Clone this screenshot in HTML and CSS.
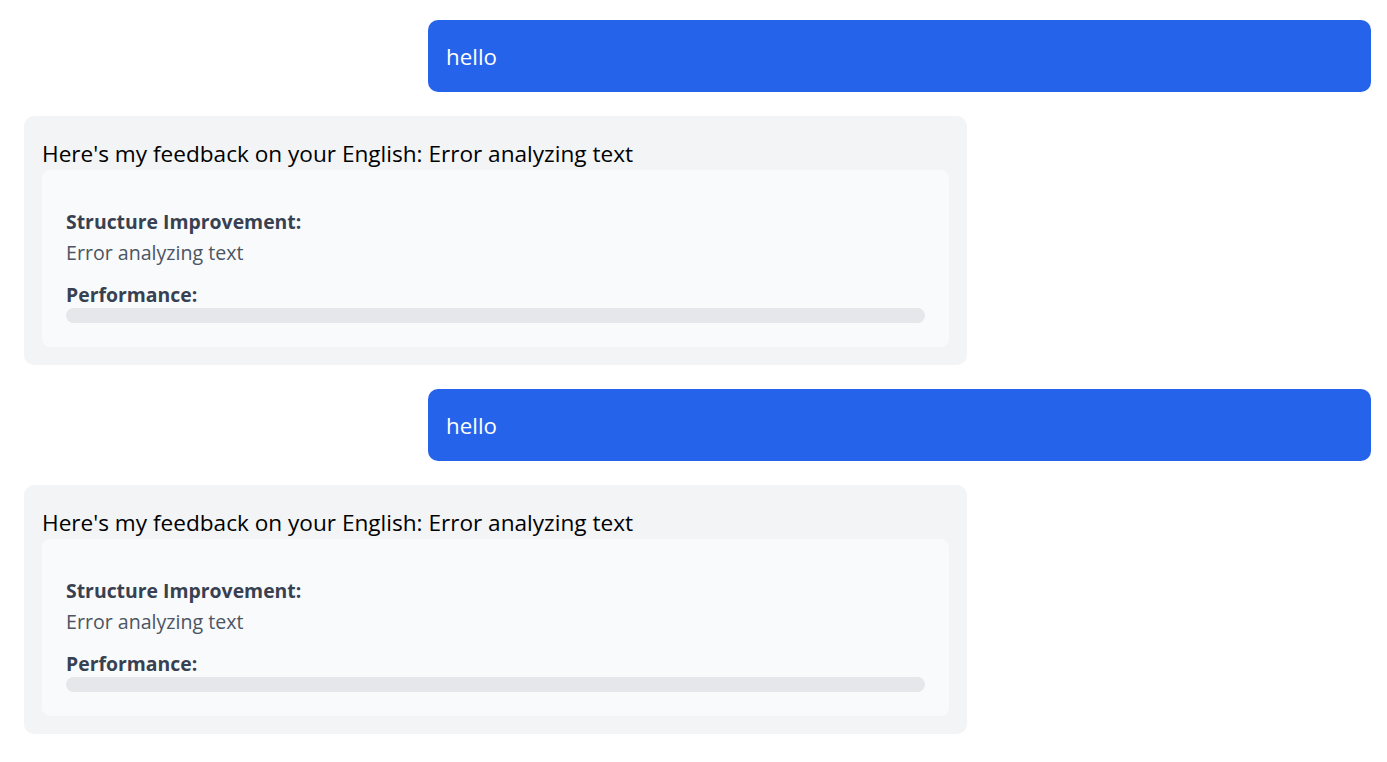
FILE: index.html
```html
<!DOCTYPE html>
<html lang="en">
<head>
<meta charset="utf-8">
<title>Chat</title>
<link rel="stylesheet" href="styles.css">
</head>
<body>
<div class="chat">
  <div class="msg user">hello</div>
  <div class="msg bot">
    <div class="bot-text">Here's my feedback on your English: Error analyzing text</div>
    <div class="feedback">
      <div class="fb-title">Structure Improvement:</div>
      <div class="fb-text">Error analyzing text</div>
      <div class="fb-title perf">Performance:</div>
      <div class="bar"></div>
    </div>
  </div>
  <div class="msg user">hello</div>
  <div class="msg bot">
    <div class="bot-text">Here's my feedback on your English: Error analyzing text</div>
    <div class="feedback">
      <div class="fb-title">Structure Improvement:</div>
      <div class="fb-text">Error analyzing text</div>
      <div class="fb-title perf">Performance:</div>
      <div class="bar"></div>
    </div>
  </div>
</div>
</body>
</html>
```
FILE: styles.css
```css
html, body {
  margin: 0;
  background: #ffffff;
}
body {
  font-family: "Open Sans", "Noto Sans", sans-serif;
  color: #111827;
}
.chat {
  display: flex;
  flex-direction: column;
  gap: 24px;
  padding: 20px 16px 20px 24px;
}
.msg {
  width: 70%;
  box-sizing: border-box;
  border-radius: 10px;
}
.user {
  align-self: flex-end;
  background: #2563eb;
  color: #ffffff;
  padding: 19px 18px 17px;
  font-size: 22.3px;
  line-height: 36px;
}
.bot {
  align-self: flex-start;
  background: #f3f4f6;
  padding: 18px;
}
.bot-text {
  padding-top: 4px;
  font-size: 22.6px;
  line-height: 32px;
  color: #000000;
}
.feedback {
  background: #f9fafb;
  border-radius: 8px;
  padding: 38px 24px 24px;
}
.fb-title {
  font-size: 19.4px;
  line-height: 28px;
  font-weight: 700;
  color: #374151;
}
.fb-text {
  margin-top: 3px;
  font-size: 19.6px;
  line-height: 28px;
  color: #4b5563;
}
.perf {
  margin-top: 13px;
  padding-top: 2px;
  line-height: 26px;
}
.bar {
  height: 15px;
  border-radius: 8px;
  background: #e5e7eb;
}
```
